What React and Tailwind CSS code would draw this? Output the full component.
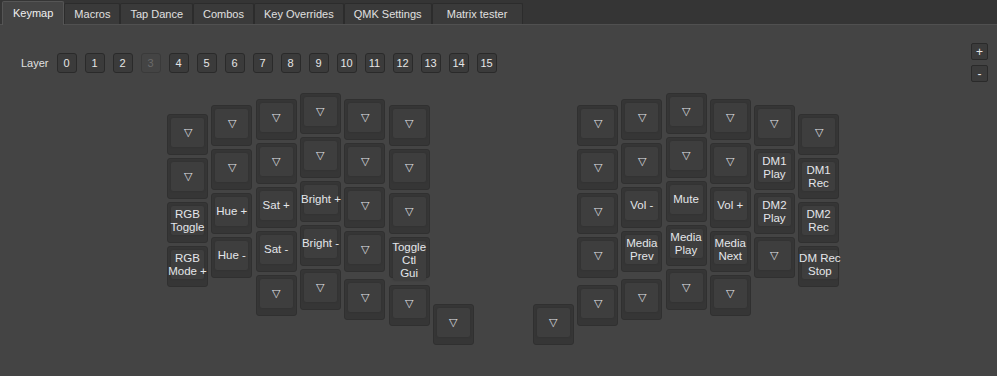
import { useState } from 'react'

const tabs = ['Keymap', 'Macros', 'Tap Dance', 'Combos', 'Key Overrides', 'QMK Settings', 'Matrix tester']
const layers = Array.from({ length: 16 }, (_, i) => i)
const T = '▽'

// each column: top offset, keys; "last" pushes the bottom key down a little
const leftCols = [
  { top: 'pt-[21px]', keys: [T, T, 'RGB\nToggle', 'RGB\nMode +'] },
  { top: 'pt-[12px]', keys: [T, T, 'Hue +', 'Hue -'] },
  { top: 'pt-[6px]', keys: [T, T, 'Sat +', 'Sat -', T] },
  { top: 'pt-0', keys: [T, T, 'Bright +', 'Bright -', T] },
  { top: 'pt-[6px]', keys: [T, T, T, T, T], last: true },
  { top: 'pt-[12px]', keys: [T, T, T, 'Toggle\nCtl\nGui', T], last: true },
  { top: 'pt-[211px]', keys: [T] },
]

const rightCols = [
  { top: 'pt-[211px]', keys: [T] },
  { top: 'pt-[12px]', keys: [T, T, T, T, T], last: true },
  { top: 'pt-[6px]', keys: [T, T, 'Vol -', 'Media\nPrev', T], last: true },
  { top: 'pt-0', keys: [T, T, 'Mute', 'Media\nPlay', T] },
  { top: 'pt-[6px]', keys: [T, T, 'Vol +', 'Media\nNext', T] },
  { top: 'pt-[12px]', keys: [T, 'DM1\nPlay', 'DM2\nPlay', T] },
  { top: 'pt-[21px]', keys: [T, 'DM1\nRec', 'DM2\nRec', 'DM Rec\nStop'] },
]

const Key = ({ label, extra }) => (
  <div className={`w-[41px] h-[41px] rounded-[3px] bg-[#363636] border border-[#303030] grid ${extra ? 'mt-[4px]' : ''}`}>
    <div className="[grid-area:1/1] mt-[3px] mx-[3px] mb-[7px] rounded-[2px] bg-[#3e3e3e] shadow-[0_0_2px_#2e2e2e]" />
    <div className="[grid-area:1/1] mt-[3px] mb-[7px] flex flex-col items-center [justify-content:safe_center] text-center overflow-y-clip whitespace-pre text-[11.5px] leading-[13px] text-[#e4e6ea]">
      {label === T ? <span className="text-[11px]">{T}</span> : label}
    </div>
  </div>
)

const Column = ({ col }) => (
  <div className={`flex flex-col gap-[3px] ${col.top}`}>
    {col.keys.map((k, i) => (
      <Key key={i} label={k} extra={col.last && i === col.keys.length - 1} />
    ))}
  </div>
)

export default function App() {
  const [tab, setTab] = useState(0)
  const [layer, setLayer] = useState(3)

  return (
    <div className="w-[997px] h-[376px] bg-[#444444] flex flex-col overflow-hidden" style={{ fontFamily: '"Liberation Sans", Arial, sans-serif' }}>
      <div className="h-[25px] bg-[#353535] border-b border-[#505050] flex items-end pl-[2px] shrink-0">
        {tabs.map((t, i) => (
          <button
            key={t}
            onClick={() => setTab(i)}
            className={
              (i === tab
                ? 'h-[24px] -mb-px px-[10px] bg-[#444444] border border-b-0 border-[#555555] rounded-t-[2px] text-[11px] text-[#f0f0f0]'
                : 'h-[21px] px-[9px] bg-[#3a3a3a] border border-b-0 border-[#2c2c2c] rounded-t-[2px] text-[11px] text-[#e0e0e0]') +
              (i === tabs.length - 1 ? ' w-[91px]' : '')
            }
          >
            {t}
          </button>
        ))}
      </div>

      <div className="flex-1 flex">
        <div className="flex-1 flex flex-col">
          <div className="flex items-center pl-[21px] pt-[28px] gap-[8px]">
            <span className="text-[11px] text-[#e0e0e0]">Layer</span>
            {layers.map(l => (
              <button
                key={l}
                onClick={() => setLayer(l)}
                className={
                  l === layer
                    ? 'w-[20px] h-[20px] rounded-[3px] border border-[#3a3a3a] bg-[#444444] text-[11px] text-[#6a6a6a]'
                    : 'w-[20px] h-[20px] rounded-[3px] border border-[#2a2a2a] bg-[#3b3b3b] text-[11px] text-[#e6e6e6]'
                }
              >
                {l}
              </button>
            ))}
          </div>

          <div className="flex pl-[167px] pt-[20px]">
            <div className="flex gap-[3.33px]">
              {leftCols.map((c, i) => <Column key={i} col={c} />)}
            </div>
            <div className="flex gap-[3.2px] ml-[59px]">
              {rightCols.map((c, i) => <Column key={i} col={c} />)}
            </div>
          </div>
        </div>

        <div className="flex flex-col gap-[5px] pt-[18px] pr-[9px]">
          <button className="w-[17px] h-[17px] rounded-[2px] border border-[#2a2a2a] bg-[#3b3b3b] text-[12px] leading-none text-[#e6e6e6]">+</button>
          <button className="w-[17px] h-[17px] rounded-[2px] border border-[#2a2a2a] bg-[#3b3b3b] text-[12px] leading-none text-[#e6e6e6]">-</button>
        </div>
      </div>
    </div>
  )
}
